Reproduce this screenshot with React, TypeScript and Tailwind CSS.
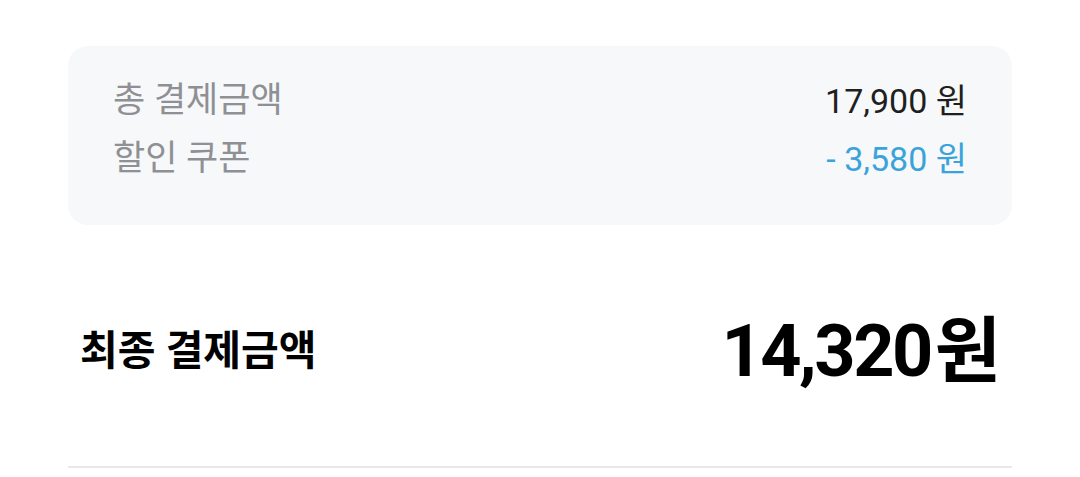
import React from "react";

const App: React.FC = () => {
  return (
    <div className="w-[1080px] h-[477px] bg-white px-[68px] pt-[46px] font-['Roboto','Noto_Sans_CJK_KR',sans-serif]">
      <div className="rounded-[20px] bg-[#f7f8fa] px-[45px] pt-[32px] pb-[43px] flex flex-col gap-[12px]">
        <div className="flex justify-between items-center h-[46px]">
          <span className="text-[35px] text-[#8e9094]">총 결제금액</span>
          <span className="text-[34px] text-[#1f1f1f]">17,900 원</span>
        </div>
        <div className="flex justify-between items-center h-[46px]">
          <span className="text-[35px] text-[#8e9094]">할인 쿠폰</span>
          <span className="text-[34px] text-[#3ba3db]">- 3,580 원</span>
        </div>
      </div>
      <div className="flex justify-between items-center pl-[12px] pr-[11px] pt-[13px] h-[243px] border-b-2 border-[#e8e8e8]">
        <span className="text-[41px] font-bold text-black">최종 결제금액</span>
        <span className="text-[72px] font-bold text-black leading-none">
          <span className="tracking-[-2.5px]">14,320</span>
          <span className="ml-[4px]">원</span>
        </span>
      </div>
    </div>
  );
};

export default App;
